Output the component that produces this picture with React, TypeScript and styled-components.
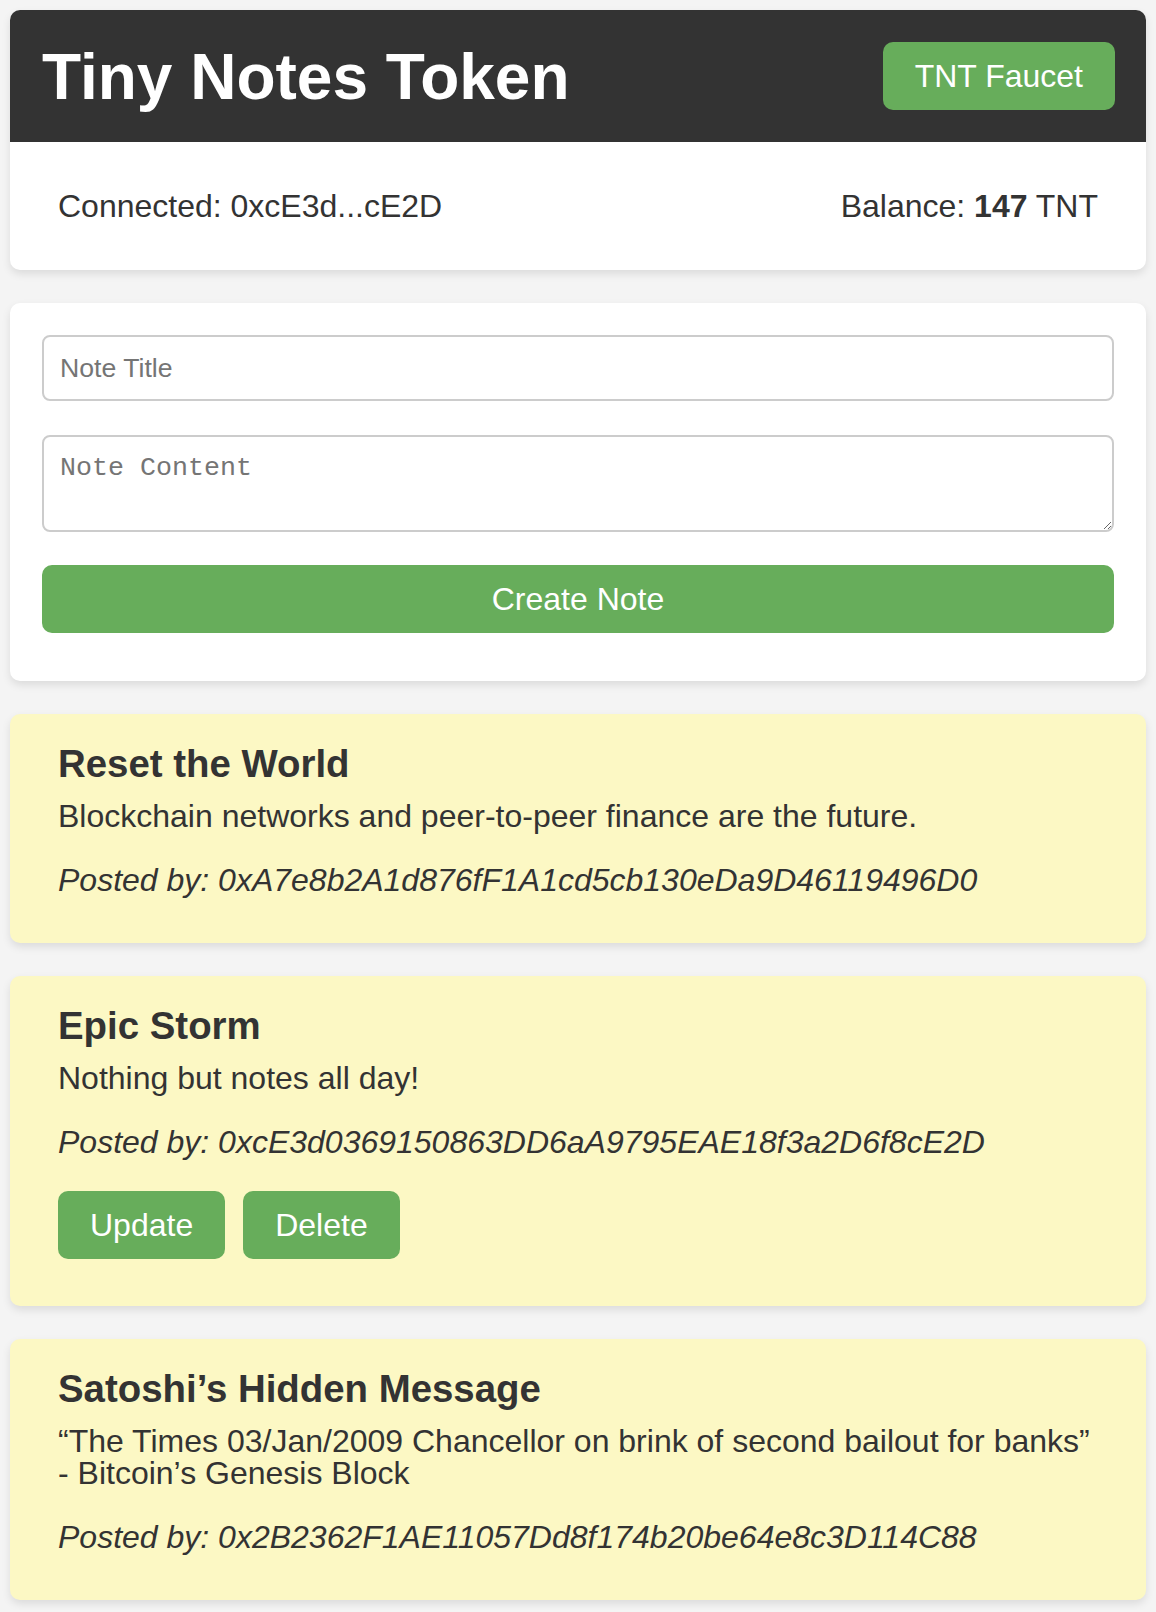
import React from "react";
import styled, { createGlobalStyle } from "styled-components";

const GlobalStyle = createGlobalStyle`
  html, body {
    margin: 0;
    padding: 0;
    background: #f4f4f4;
  }
  body {
    font-family: "Liberation Sans", Arial, Helvetica, sans-serif;
    color: #333333;
  }
  * { box-sizing: border-box; }
`;

const Page = styled.div`
  display: flex;
  flex-direction: column;
  gap: 33px;
  padding: 10px;
`;

const TopCard = styled.section`
  display: flex;
  flex-direction: column;
  border-radius: 10px;
  background: #ffffff;
  box-shadow: 0 4px 8px rgba(0, 0, 0, 0.1);
  overflow: hidden;
`;

const Header = styled.header`
  display: flex;
  align-items: center;
  justify-content: space-between;
  height: 132px;
  padding: 0 31px 0 32px;
  background: #333333;
`;

const Title = styled.h1`
  margin: 4px 0 0;
  font-size: 64px;
  font-weight: 700;
  line-height: 1.15;
  color: #ffffff;
`;

const GreenButton = styled.button<{ $block?: boolean }>`
  display: ${(p) => (p.$block ? "block" : "inline-block")};
  width: ${(p) => (p.$block ? "100%" : "auto")};
  height: 68px;
  padding: 0 32px;
  border: none;
  border-radius: 10px;
  background: #67ad5b;
  color: #ffffff;
  font-family: "Liberation Sans", Arial, Helvetica, sans-serif;
  font-size: 32px;
  line-height: 1;
  cursor: pointer;
`;

const InfoBar = styled.div`
  display: flex;
  align-items: center;
  justify-content: space-between;
  height: 128px;
  padding: 0 48px;
  font-size: 32px;
  line-height: 1.15;
`;

const FormCard = styled.form`
  display: flex;
  flex-direction: column;
  padding: 32px 32px 48px;
  border-radius: 10px;
  background: #ffffff;
  box-shadow: 0 4px 8px rgba(0, 0, 0, 0.1);
`;

const TitleInput = styled.input`
  height: 66px;
  width: 100%;
  padding: 0 16px;
  border: 2px solid #cccccc;
  border-radius: 8px;
  font-family: "Liberation Sans", Arial, Helvetica, sans-serif;
  font-size: 26.67px;
  color: #333333;
  margin-bottom: 34px;
  &::placeholder { color: #757575; }
`;

const ContentArea = styled.textarea`
  height: 97px;
  width: 100%;
  padding: 16px 16px 14px;
  border: 2px solid #cccccc;
  border-radius: 8px;
  font-family: "Liberation Mono", "Courier New", monospace;
  font-size: 26.67px;
  color: #333333;
  margin-bottom: 33px;
  &::placeholder { color: #757575; }
`;

const NoteCard = styled.article`
  display: flex;
  flex-direction: column;
  padding: 30px 48px 47px;
  border-radius: 10px;
  background: #fcf8c4;
  box-shadow: 0 4px 8px rgba(0, 0, 0, 0.1);
`;

const NoteTitle = styled.h3`
  margin: 0 0 16px;
  font-size: 38.4px;
  font-weight: 700;
  line-height: 40px;
`;

const NoteText = styled.p<{ $italic?: boolean }>`
  margin: 0;
  font-size: 32px;
  line-height: 32px;
  font-style: ${(p) => (p.$italic ? "italic" : "normal")};
  & + & { margin-top: 32px; }
`;

const Actions = styled.div`
  display: flex;
  gap: 18px;
  margin-top: 33px;
`;

type Note = { title: string; content: string; author: string; mine?: boolean };

const notes: Note[] = [
  {
    title: "Reset the World",
    content: "Blockchain networks and peer-to-peer finance are the future.",
    author: "0xA7e8b2A1d876fF1A1cd5cb130eDa9D46119496D0",
  },
  {
    title: "Epic Storm",
    content: "Nothing but notes all day!",
    author: "0xcE3d0369150863DD6aA9795EAE18f3a2D6f8cE2D",
    mine: true,
  },
  {
    title: "Satoshi\u2019s Hidden Message",
    content:
      "\u201CThe Times 03/Jan/2009 Chancellor on brink of second bailout for banks\u201D - Bitcoin\u2019s Genesis Block",
    author: "0x2B2362F1AE11057Dd8f174b20be64e8c3D114C88",
  },
];

export default function App() {
  return (
    <>
      <GlobalStyle />
      <Page>
        <TopCard>
          <Header>
            <Title>Tiny Notes Token</Title>
            <GreenButton type="button">TNT Faucet</GreenButton>
          </Header>
          <InfoBar>
            <span>Connected: 0xcE3d...cE2D</span>
            <span>
              Balance: <strong>147</strong> TNT
            </span>
          </InfoBar>
        </TopCard>

        <FormCard onSubmit={(e) => e.preventDefault()}>
          <TitleInput type="text" placeholder="Note Title" />
          <ContentArea placeholder="Note Content" />
          <GreenButton type="submit" $block>
            Create Note
          </GreenButton>
        </FormCard>

        {notes.map((n) => (
          <NoteCard key={n.title}>
            <NoteTitle>{n.title}</NoteTitle>
            <NoteText>{n.content}</NoteText>
            <NoteText $italic>Posted by: {n.author}</NoteText>
            {n.mine && (
              <Actions>
                <GreenButton type="button">Update</GreenButton>
                <GreenButton type="button">Delete</GreenButton>
              </Actions>
            )}
          </NoteCard>
        ))}
      </Page>
    </>
  );
}
